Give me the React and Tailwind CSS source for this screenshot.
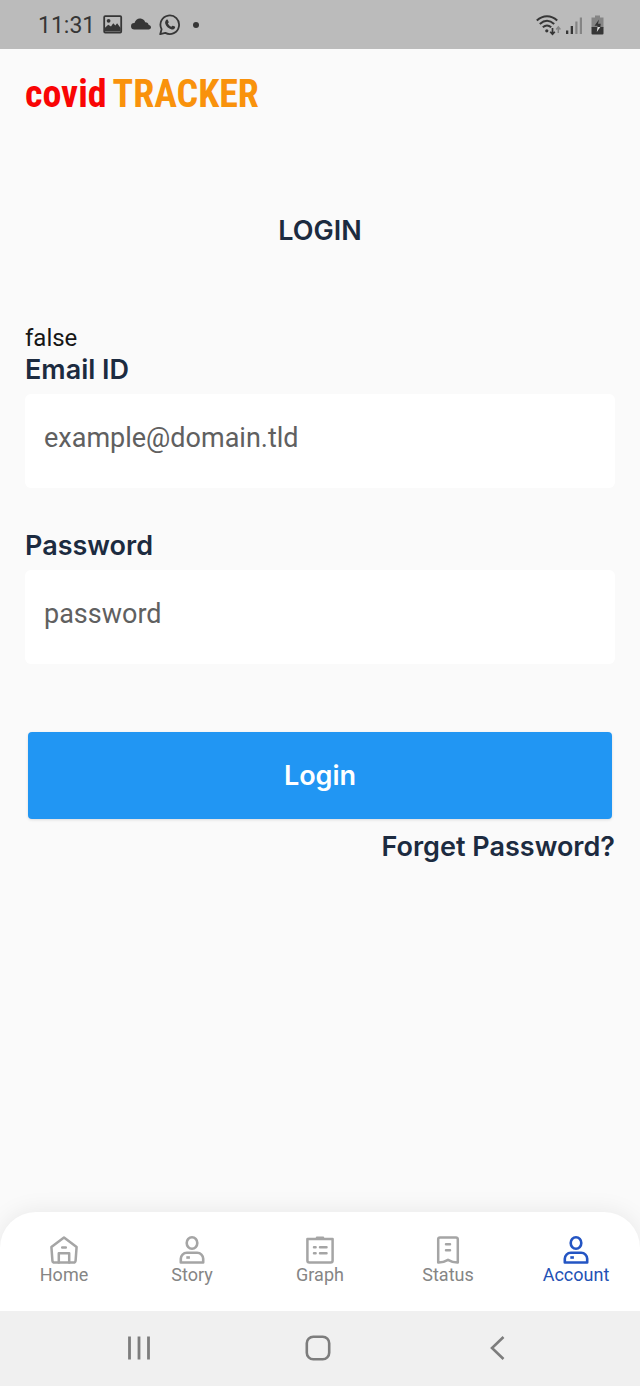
import React from "react";

const ROBOTO = "font-[Roboto,sans-serif]";
const INTER = "font-[Inter,sans-serif]";

function StatusBar() {
  return (
    <header className="flex h-[49px] items-center justify-between bg-[#bbbbbb] pl-[38px] pr-9 text-[#363636]">
      <div className="flex items-center gap-2">
        <time className="pt-0.5 text-[23px] leading-7">11:31</time>
        <svg width="20" height="20" viewBox="0 0 20 20" aria-hidden="true">
          <rect x="1.2" y="1.2" width="17" height="16.4" rx="1" fill="none" stroke="currentColor" strokeWidth="1.8" />
          <circle cx="5.6" cy="5.8" r="1.9" fill="currentColor" />
          <path d="M2 16.5v-3.8l3.2-3 2.800 1.900 2.200-3.300 2.200 2.200 1.700-2.200L17.600 13v3.500z" fill="currentColor" />
        </svg>
        <svg width="20" height="20" viewBox="0 0 20 20" aria-hidden="true">
          <path d="M3.500 14.500A3.400 3.400 0 0 1 0 11.300a3.300 3.300 0 0 1 3.500-3.200C4.200 4.700 7 3.100 9.600 3.500c2.300.3 4 1.600 4.600 3.700 2-.1 3.300 1.200 3.500 2.900 1.400.2 2.300 1.100 2.300 2.200 0 1.300-1 2.200-2.300 2.200z" fill="currentColor" />
        </svg>
        <svg width="22" height="22" viewBox="0 0 22 22" aria-hidden="true">
          <path d="M1.200 20.200l1.400-5A9.300 9.300 0 1 1 6.300 18.900z" fill="none" stroke="currentColor" strokeWidth="1.800" strokeLinejoin="round" />
          <path d="M7.400 5.800c.5-.4 1.200-.3 1.400.2l.9 2c.1.400-.1.800-.8 1.500.8 1.600 1.900 2.600 3.500 3.300.7-.9 1-1.300 1.500-1.100l1.900.9c.5.300.4 1.100 0 1.700-.7 1-1.900 1.400-3.100 1.100-3.300-.8-5.700-3.200-6.500-6-.3-1.300.2-2.700 1.200-3.600z" fill="currentColor" />
        </svg>
        <span className="ml-1 size-1.5 rounded-full bg-current" />
      </div>
      <div className="flex items-center">
        <svg width="25" height="22" viewBox="0 0 25 22" fill="none" stroke="currentColor" aria-hidden="true">
          <path d="M.8 6.500c6.200-5.800 14.300-5.800 20.400 0M3.800 10c4.600-4 10-4 14.400 0M6.800 13.300c2.700-2.300 5.700-2.300 8.400 0" strokeWidth="2" />
          <circle cx="10.800" cy="16.800" r="1.600" fill="currentColor" stroke="none" />
          <path d="M16.500 14v5.800M14.200 17.700l2.300 2.600 2.300-2.600" strokeWidth="1.700" />
          <path d="M22.300 19v-5.500M20.200 15.400l2.100-2.400 2.100 2.400" stroke="#858585" strokeWidth="1.500" />
        </svg>
        <svg className="ml-1" width="18" height="22" viewBox="0 0 18 22" aria-hidden="true">
          <path d="M1 16.500h2.300V20H1zM5.700 12H8v8H5.700z" fill="currentColor" />
          <path d="M10.300 7.500h2.200V20h-2.200zM14.800 3.500H17V20h-2.200z" fill="#858585" />
        </svg>
        <svg className="ml-2" width="13" height="22" viewBox="0 0 13 22" aria-hidden="true">
          <path d="M4 1.500h5v2h3.500v10H.5v-10H4z" fill="#858585" />
          <path d="M.5 13h12v6.500a1 1 0 0 1-1 1h-10a1 1 0 0 1-1-1z" fill="currentColor" />
          <path d="M8 5.500l-4.500 6.300h3V13h2.800l.5-3.300H7z" fill="currentColor" />
          <path d="M6.500 13h2.800L5.800 18z" fill="#dddddd" />
        </svg>
      </div>
    </header>
  );
}

function HomeIcon() {
  return (
    <svg width="28" height="28" viewBox="0 0 28 28" fill="none" stroke="currentColor" strokeWidth="2.500" strokeLinejoin="round" strokeLinecap="round" aria-hidden="true">
      <path d="M14 1.500L1.400 10.900 2.400 24.600a2.200 2.200 0 0 0 2.200 2h18.800a2.200 2.200 0 0 0 2.200-2l1-13.700z" />
      <path d="M8.800 26.500v-9.300h10.400v9.300M12.200 11.500h3.600" />
    </svg>
  );
}

function PersonIcon() {
  return (
    <svg width="28" height="28" viewBox="0 0 28 28" fill="none" stroke="currentColor" strokeWidth="2.600" strokeLinejoin="round" aria-hidden="true">
      <ellipse cx="14" cy="7" rx="5.300" ry="5.700" />
      <path d="M2.800 26.500v-3.700a6 6 0 0 1 6-6h10.400a6 6 0 0 1 6 6v3.700z" />
      <path d="M8.300 21.500h3.600" />
    </svg>
  );
}

function ListIcon() {
  return (
    <svg width="28" height="28" viewBox="0 0 28 28" fill="none" stroke="currentColor" strokeWidth="2.500" strokeLinejoin="round" strokeLinecap="round" aria-hidden="true">
      <path d="M1.400 3h25.200v21.600a2 2 0 0 1-2 2H3.400a2 2 0 0 1-2-2z" />
      <path d="M11 1.700h6M8 11.200h1.600M14 11.200h6.500M8 17.200h1.600M14 17.200h6.500" />
    </svg>
  );
}

function BookmarkIcon() {
  return (
    <svg width="28" height="28" viewBox="0 0 28 28" fill="none" stroke="currentColor" strokeWidth="2.500" strokeLinejoin="round" strokeLinecap="round" aria-hidden="true">
      <path d="M4.200 3.200a1.800 1.800 0 0 1 1.800-1.800h16a1.800 1.800 0 0 1 1.800 1.800v23.300C20.800 26.600 17.500 25.800 14 23.800c-3.500 2-6.800 2.800-9.800 2.700z" />
      <path d="M12 8.300h4M12 14.300h4" />
    </svg>
  );
}

const TABS = [
  { label: "Home", Icon: HomeIcon },
  { label: "Story", Icon: PersonIcon },
  { label: "Graph", Icon: ListIcon },
  { label: "Status", Icon: BookmarkIcon },
  { label: "Account", Icon: PersonIcon, active: true },
];

function TabBar() {
  return (
    <nav className="grid grid-cols-5 rounded-t-[36px] bg-white pt-6 pb-[25px] shadow-[0_0_24px_rgba(0,0,0,0.08)]">
      {TABS.map(({ label, Icon, active }) => (
        <a
          key={label}
          href={"#" + label.toLowerCase()}
          aria-current={active ? "page" : undefined}
          className={
            "flex flex-col items-center text-[18px] leading-[22px] " +
            (active ? "text-[#2351b5]" : "text-[#858585]")
          }
        >
          <span className={active ? "text-[#2455c3]" : "text-[#a5a5a5]"}>
            <Icon />
          </span>
          {label}
        </a>
      ))}
    </nav>
  );
}

function SystemBar() {
  return (
    <div className="flex h-[75px] items-center justify-around bg-[#f0f0f0] pr-[54px] pb-0.5 pl-[49px] text-[#7d7d7d]">
      <button aria-label="Recent apps">
        <svg width="28" height="28" viewBox="0 0 28 28" stroke="currentColor" strokeWidth="2.800" fill="none">
          <path d="M4.500 2.500v23M14 2.500v23M23.500 2.500v23" />
        </svg>
      </button>
      <button aria-label="Home screen">
        <svg width="28" height="28" viewBox="0 0 28 28" stroke="currentColor" strokeWidth="2.600" fill="none">
          <rect x="2.800" y="2.800" width="22.400" height="22.400" rx="6.500" />
        </svg>
      </button>
      <button aria-label="Back">
        <svg width="28" height="28" viewBox="0 0 28 28" stroke="currentColor" strokeWidth="2.600" fill="none">
          <path d="M20.500 3L9 14l11.500 11" />
        </svg>
      </button>
    </div>
  );
}

function Field({ id, label, ...input }) {
  return (
    <div className="flex flex-col gap-1.5">
      <label htmlFor={id} className={"text-[27px] leading-9 font-semibold text-[#1c2b40] " + INTER}>
        {label}
      </label>
      <input
        id={id}
        className="h-[94px] w-full rounded-md bg-white px-[19px] pb-1.5 text-[27px] text-[#222222] outline-none placeholder:text-[#606060]"
        {...input}
      />
    </div>
  );
}

export default function App() {
  return (
    <div className={"flex min-h-screen flex-col bg-[#fafafa] " + ROBOTO}>
      <StatusBar />
      <main className="flex flex-1 flex-col px-[25px] pt-[25px]">
        <div className="flex items-baseline gap-1.5 font-['Roboto_Condensed',Lato,sans-serif] text-[38px] leading-10 font-bold">
          <span className="text-[#f90505]">covid</span>
          <span className="text-[#f9920c]">TRACKER</span>
        </div>
        <h1 className={"mt-[99px] text-center text-[27px] leading-9 font-semibold text-[#1c2b40] " + INTER}>LOGIN</h1>
        <form className="mt-[75px] flex flex-col" onSubmit={(e) => e.preventDefault()}>
          <p className="text-[24px] leading-7 text-[#161616]">false</p>
          <Field id="email" label="Email ID" type="email" placeholder="example@domain.tld" />
          <div className="mt-10">
            <Field id="password" label="Password" type="password" placeholder="password" />
          </div>
          <button
            type="submit"
            className={"mx-[3px] mt-[68px] h-[87px] rounded-sm bg-[#2196f3] pt-0.5 text-[27px] font-semibold text-white shadow-[0_1px_3px_rgba(0,0,0,0.12)] " + INTER}
          >
            Login
          </button>
          <a href="#forget" className={"mt-2.5 self-end text-[27px] leading-9 font-semibold text-[#1c2b40] " + INTER}>
            Forget Password?
          </a>
        </form>
      </main>
      <TabBar />
      <SystemBar />
    </div>
  );
}
